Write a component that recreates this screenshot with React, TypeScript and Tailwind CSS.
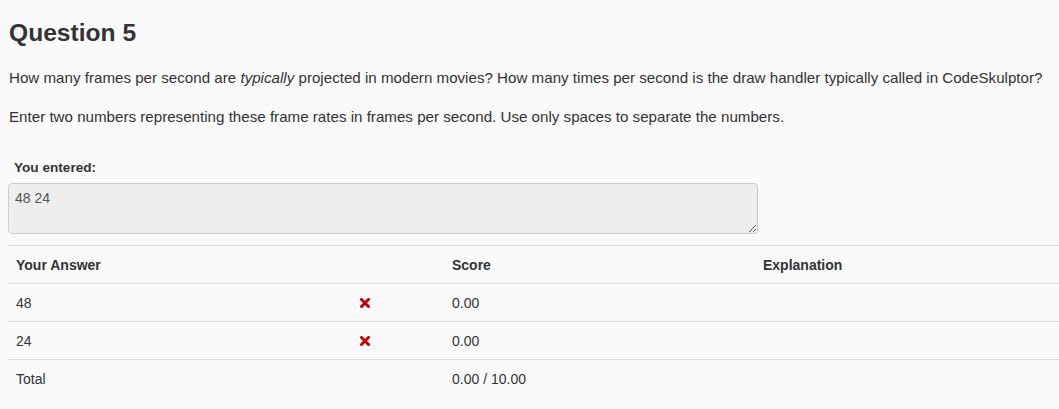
const rows = [
  { answer: '48', wrong: true, score: '0.00' },
  { answer: '24', wrong: true, score: '0.00' },
];

const WrongMark = () => (
  <svg width="10" height="10" viewBox="0 0 10 10" className="block">
    <path d="M1.5 1.5 L8.5 8.5 M8.5 1.5 L1.5 8.5" stroke="#c40010" strokeWidth="3" strokeLinecap="square" />
  </svg>
);

export default function App() {
  return (
    <div
      className="min-h-[409px] w-full bg-[#fafafa] pl-[8px] text-[14px] leading-[20px] text-[#333]"
      style={{ fontFamily: '"Liberation Sans", Arial, sans-serif' }}
    >
      <h3 className="pt-[19px] pl-[1px] text-[24.6px] font-bold leading-[28px]">Question 5</h3>

      <p className="mt-[21px] pl-[1px] text-[15.15px]">
        How many frames per second are <em>typically</em> projected in modern movies? How many times per second is
        the draw handler typically called in CodeSkulptor?
      </p>
      <p className="mt-[19px] pl-[1px] text-[15.15px]">
        Enter two numbers representing these frame rates in frames per second. Use only spaces to separate the numbers.
      </p>

      <div className="mt-[32px] pl-[6px] text-[13.6px] font-bold leading-[18px]">You entered:</div>
      <textarea
        readOnly
        defaultValue="48 24"
        className="mt-[6px] block h-[51px] w-[750px] resize-y rounded-[4px] border border-[#ccc] bg-[#eee] px-[6px] pt-[4px] text-[14px] leading-[20px] text-[#555] outline-none"
      />

      <table className="mt-[11px] w-[1051px] border-collapse text-left">
        <thead>
          <tr className="border-t border-[#ddd]">
            <th className="h-[38px] w-[344px] px-[8px] align-middle text-[14px] font-bold">Your Answer</th>
            <th className="w-[92px] px-[8px]"></th>
            <th className="w-[311px] px-[8px] text-[14px] font-bold">Score</th>
            <th className="px-[8px] text-[14px] font-bold">Explanation</th>
          </tr>
        </thead>
        <tbody>
          {rows.map((r, i) => (
            <tr key={i} className="border-t border-[#ddd]">
              <td className="h-[38px] px-[8px]">{r.answer}</td>
              <td className="px-[8px]">{r.wrong && <WrongMark />}</td>
              <td className="px-[8px]">{r.score}</td>
              <td className="px-[8px]"></td>
            </tr>
          ))}
          <tr className="border-t border-[#ddd]">
            <td className="h-[38px] px-[8px]">Total</td>
            <td className="px-[8px]"></td>
            <td className="px-[8px]">0.00 / 10.00</td>
            <td className="px-[8px]"></td>
          </tr>
        </tbody>
      </table>
    </div>
  );
}
